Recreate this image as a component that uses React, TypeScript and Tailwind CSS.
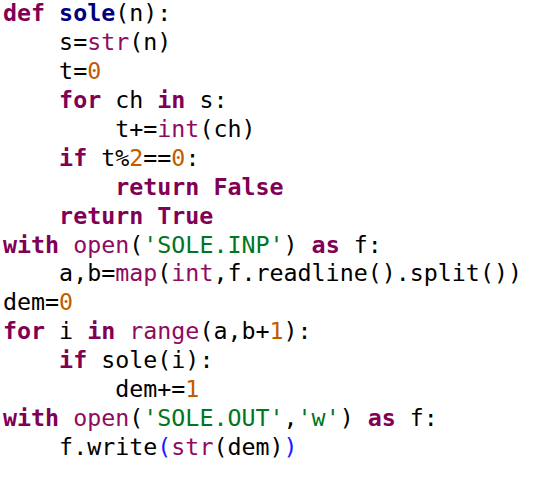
const K = ({ children }: { children: React.ReactNode }) => (
  <span className="font-bold text-[#7f0055]">{children}</span>
);
const B = ({ children }: { children: React.ReactNode }) => (
  <span className="text-[#900a5f]">{children}</span>
);
const N = ({ children }: { children: React.ReactNode }) => (
  <span className="text-[#c45a00]">{children}</span>
);
const S = ({ children }: { children: React.ReactNode }) => (
  <span className="text-[#00761f]">{children}</span>
);

export default function App() {
  return (
    <div className="w-[540px] h-[483px] bg-white overflow-hidden">
      <pre className="-mt-[1px] pl-[3px] font-['DejaVu_Sans_Mono',monospace] text-[23.3px] leading-[28.93px] text-black whitespace-pre">
        <div>
          <K>def</K> <span className="font-bold text-[#000080]">sole</span>(n):
        </div>
        <div>
          {"    "}s=<B>str</B>(n)
        </div>
        <div>
          {"    "}t=<N>0</N>
        </div>
        <div>
          {"    "}<K>for</K> ch <K>in</K> s:
        </div>
        <div>
          {"        "}t+=<B>int</B>(ch)
        </div>
        <div>
          {"    "}<K>if</K> t%<N>2</N>==<N>0</N>:
        </div>
        <div>
          {"        "}<K>return</K> <K>False</K>
        </div>
        <div>
          {"    "}<K>return</K> <K>True</K>
        </div>
        <div>
          <K>with</K> <B>open</B>(<S>'SOLE.INP'</S>) <K>as</K> f:
        </div>
        <div>
          {"    "}a,b=<B>map</B>(<B>int</B>,f.readline().split())
        </div>
        <div>
          dem=<N>0</N>
        </div>
        <div>
          <K>for</K> i <K>in</K> <B>range</B>(a,b+<N>1</N>):
        </div>
        <div>
          {"    "}<K>if</K> sole(i):
        </div>
        <div>
          {"        "}dem+=<N>1</N>
        </div>
        <div>
          <K>with</K> <B>open</B>(<S>'SOLE.OUT'</S>,<S>'w'</S>) <K>as</K> f:
        </div>
        <div>
          {"    "}f.write<span className="text-[#1a1aff]">(</span><B>str</B>(dem)<span className="text-[#1a1aff]">)</span>
        </div>
      </pre>
    </div>
  );
}
